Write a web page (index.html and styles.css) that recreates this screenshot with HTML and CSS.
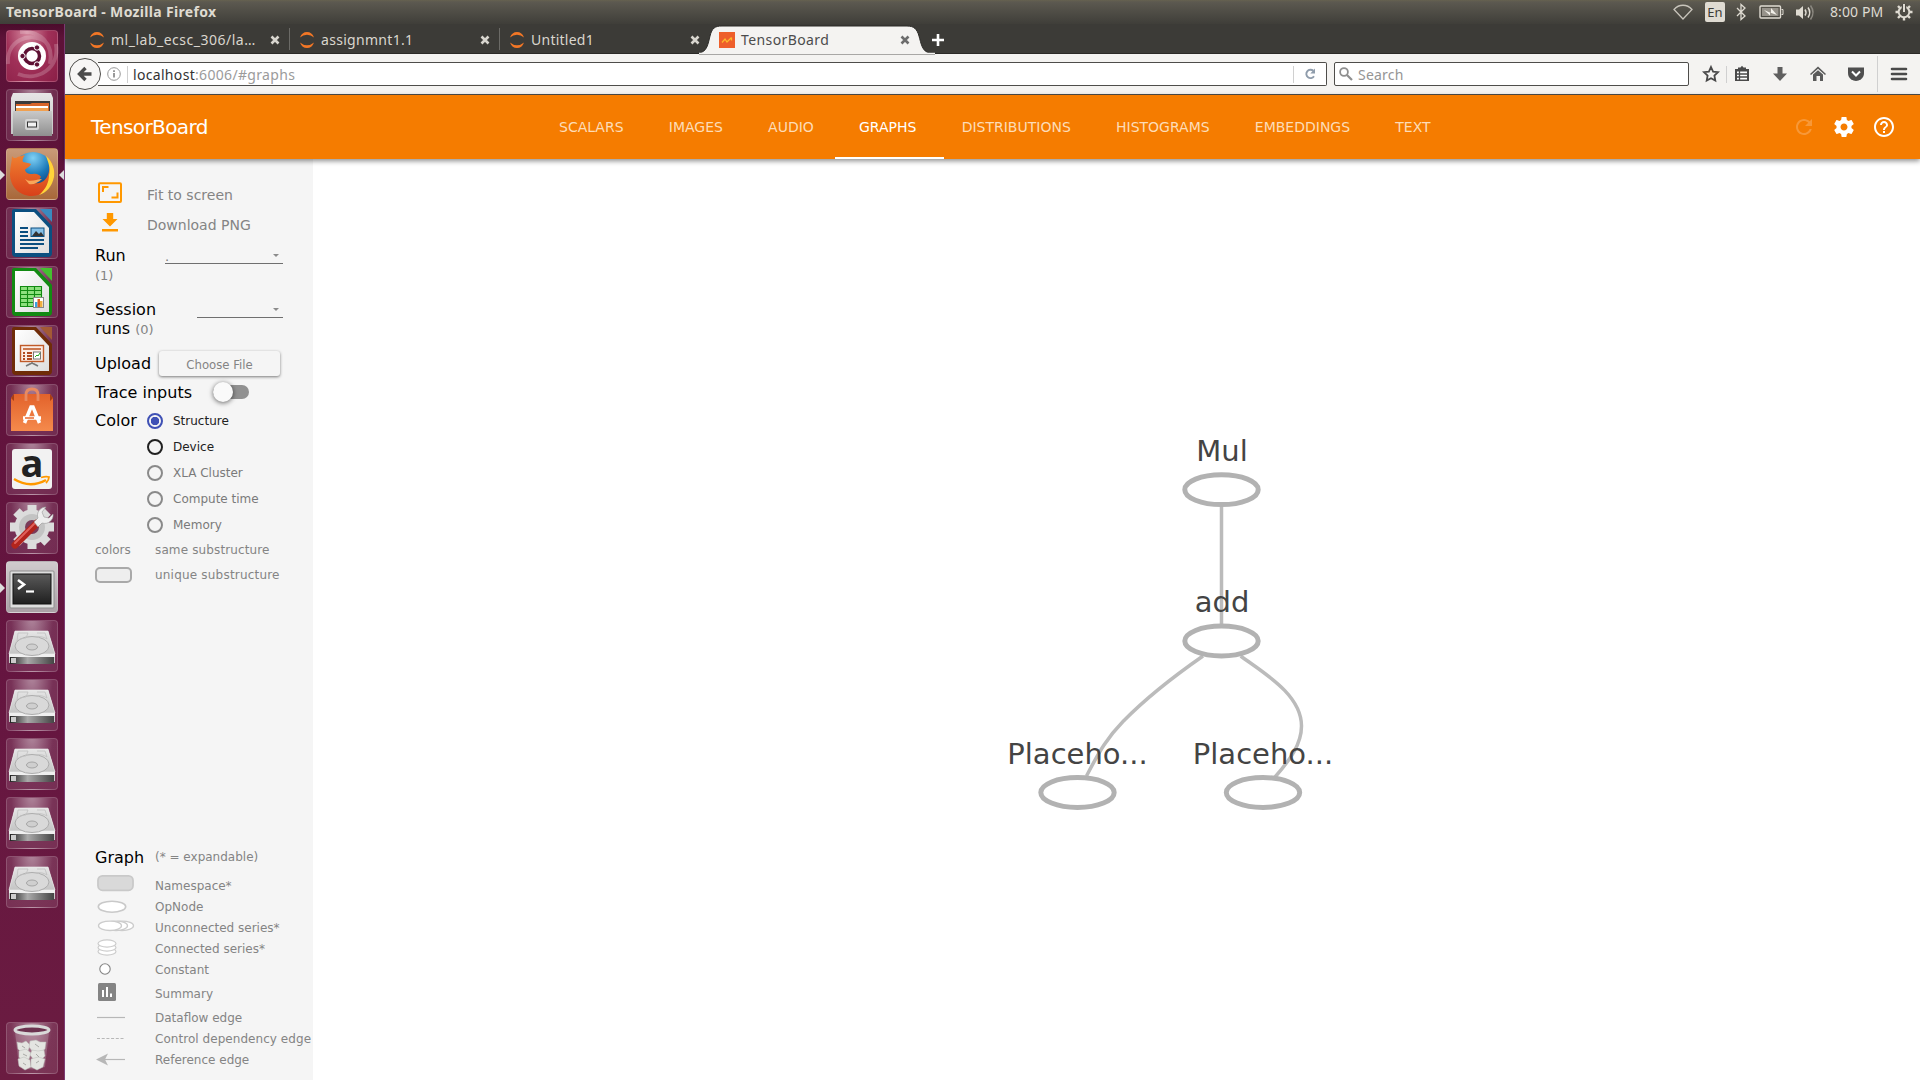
FILE: index.html
```html
<!DOCTYPE html>
<html lang="en">
<head>
<meta charset="utf-8">
<title>TensorBoard - Mozilla Firefox</title>
<link rel="stylesheet" href="styles.css">
</head>
<body>
<svg class="defs" aria-hidden="true">
  <defs>
    <linearGradient id="metal" x1="0" y1="0" x2="0" y2="1"><stop offset="0" stop-color="#e6e6e6"/><stop offset="1" stop-color="#c4c4c4"/></linearGradient>
    <linearGradient id="drawer" x1="0" y1="0" x2="0" y2="1"><stop offset="0" stop-color="#c9c9c9"/><stop offset="1" stop-color="#8f8f8f"/></linearGradient>
    <linearGradient id="paper" x1="0" y1="0" x2="1" y2="1"><stop offset="0" stop-color="#ffffff"/><stop offset="1" stop-color="#dedede"/></linearGradient>
    <linearGradient id="edge" x1="0" y1="0" x2="1" y2="0"><stop offset="0" stop-color="#222"/><stop offset=".4" stop-color="#aaa"/><stop offset="1" stop-color="#444"/></linearGradient>
    <linearGradient id="bag" x1="0" y1="0" x2="0" y2="1"><stop offset="0" stop-color="#e2622b"/><stop offset="1" stop-color="#f58a4c"/></linearGradient>
    <radialGradient id="globe" cx=".5" cy=".15" r=".85"><stop offset="0" stop-color="#7fd0f5"/><stop offset=".5" stop-color="#1a78b8"/><stop offset="1" stop-color="#0d2c66"/></radialGradient>
    <linearGradient id="fox" x1="0" y1="0" x2="0" y2="1"><stop offset="0" stop-color="#f08030"/><stop offset="1" stop-color="#d8401a"/></linearGradient>
    <linearGradient id="term" x1="0" y1="0" x2="0" y2="1"><stop offset="0" stop-color="#5a5a5a"/><stop offset="1" stop-color="#1f1f1f"/></linearGradient>
    <symbol id="disk" viewBox="0 0 52 52">
      <path d="M9 11h33l7 23v9H3v-9z" fill="url(#metal)"/>
      <path d="M9 11h33l7 23H3z" fill="url(#metal)" stroke="#efefef" stroke-width=".6"/>
      <path d="M4 37h44v7H4z" fill="url(#edge)"/>
      <path d="M3 34h46v3H3z" fill="#efefef"/>
      <path d="M5 38h5v5H5z" fill="#ccc"/>
      <ellipse cx="26" cy="26" rx="17" ry="9.500" fill="#d9d9d9" stroke="#adadad"/>
      <path d="M12 13h10l-2 5c-4 0-6 1-9 3zM31 13h8l2 6c-3-2-7-3-11-2" fill="none" stroke="#c0c0c0" stroke-width=".8"/>
      <ellipse cx="26" cy="27" rx="5.500" ry="3" fill="#cfcfcf" stroke="#999" stroke-width=".8"/>
    </symbol>
  </defs>
</svg>

<div class="desktop">
  <header class="panel">
    <span class="panel-title">TensorBoard - Mozilla Firefox</span>
    <div class="tray">
      <svg class="t-wifi" width="22" height="16" viewBox="0 0 22 16"><path d="M2 5.500C7-.2 15-.2 20 5.500L11 15z" fill="none" stroke="#c8c4bb" stroke-width="1.300"/></svg>
      <span class="lang">En</span>
      <svg class="t-bt" width="10" height="18" viewBox="0 0 10 18"><path d="M1 5l8 8-4 3.500v-15L9 5l-8 8" fill="none" stroke="#dfdbd2" stroke-width="1.300"/></svg>
      <svg class="t-bat" width="25" height="14" viewBox="0 0 25 14"><rect x="1" y="1" width="20.500" height="12" rx="1" fill="none" stroke="#dfdbd2" stroke-width="1.400"/><rect x="3" y="3" width="16.500" height="8" fill="#96928a"/><path d="M22.500 4.500h1.500v5h-1.500" fill="none" stroke="#dfdbd2"/><path d="M5 5l7 3V3l6 7-7-2.500v3z" fill="#f2f0ea"/></svg>
      <svg class="t-vol" width="21" height="17" viewBox="0 0 21 17"><path d="M1 5.500h3L8 2v13l-4-3.500H1z" fill="#dfdbd2"/><path d="M10 5.500q2 3 0 6M13 3.500q3.500 5 0 10" fill="none" stroke="#dfdbd2" stroke-width="1.500"/><path d="M15.500 1.500q5 7 0 14" fill="none" stroke="#8b8880" stroke-width="1.500"/></svg>
      <span class="clock">8:00 PM</span>
      <svg class="t-gear" width="18" height="18" viewBox="-9 -9 18 18"><circle r="5.300" fill="none" stroke="#dfdbd2" stroke-width="1.900"/><path d="M0-8v8" stroke="#4c4a44" stroke-width="4.500"/><path d="M0-8v8" stroke="#dfdbd2" stroke-width="2"/><path d="M6 0h2.500M-6 0h-2.500M0 6v2.500M4.200 4.200L6 6M-4.200 4.200L-6 6M4.200-4.200L6-6M-4.200-4.200L-6-6" stroke="#dfdbd2" stroke-width="2.400"/></svg>
    </div>
  </header>

  <div class="workspace">
    <nav class="launcher">
      <div class="tile dash"><svg viewBox="0 0 52 52"><path d="M2 34C0 12 22 0 40 12M50 14C54 38 32 52 12 44M14 2C34 0 48 14 44 34" fill="none" stroke="#fff" stroke-opacity=".2" stroke-width="4"/><circle cx="26" cy="26" r="14" fill="#fff"/><circle cx="26" cy="26" r="7.500" fill="none" stroke="#5e1033" stroke-width="3.500"/><g fill="#5e1033" stroke="#fff" stroke-width="1"><circle cx="16.500" cy="26" r="2.700"/><circle cx="31" cy="17.500" r="2.700"/><circle cx="31" cy="34.500" r="2.700"/></g></svg></div>
      <div class="tile"><svg viewBox="0 0 52 52"><path d="M7 4h38l2 5v36H5V9z" fill="url(#metal)"/><rect x="9" y="12" width="35" height="12" fill="#3a3a3a"/><path d="M10 15h14l2-1h17v9H10z" fill="#d8652a"/><rect x="10" y="17" width="32" height="2" fill="#fff"/><rect x="10" y="19" width="32" height="4" fill="#f0a050"/><rect x="7" y="22" width="39" height="25" fill="url(#drawer)"/><rect x="19" y="30" width="14" height="11" rx="2" fill="#d5d5d5"/><rect x="21.500" y="33" width="9" height="5" fill="#f2f2f2" stroke="#333"/></svg></div>
      <div class="tile firefox running active"><svg viewBox="0 0 52 52"><circle cx="27" cy="24" r="20" fill="url(#globe)"/><path d="M6 8c1 2 2 2 4 2 3-2 6-2 9-3-2 3-3 5-2 7 3 1 7 1 8 2-1 3-5 4-6 6 1 4 5 4 8 4 3-1 7 1 8 3-2 4-7 5-11 4 4 4 13 3 17-4 3-5 3-13 2-18 4 5 6 10 5 17C46 39 37 48 26 48 13 48 4 38 4 26 4 19 6 13 6 8z" fill="url(#fox)"/><path d="M40 8c7 6 9 14 8 21-2 10-8 16-15 18 7-6 10-13 10-20 2-7-1-13-3-19z" fill="#ffd43a"/><path d="M19 31c6 4 11 0 17 0-4 4-9 6-13 5z" fill="#f9a65a"/></svg></div>
      <div class="tile"><svg viewBox="0 0 52 52"><path d="M8 2h22l16 17v27q0 4-4 4H10q-4 0-4-4V4q0-2 2-2z" fill="#0b4f80"/><path d="M34 2h12v13z" fill="#3a8abf"/><path d="M9 5h19l15 16v25H9z" fill="url(#paper)"/><path d="M14 21h8M14 25h8M14 29h8M14 33h24M14 37h24M14 41h18" stroke="#0b4f80" stroke-width="1.800"/><rect x="25" y="21" width="13" height="8.500" fill="#86c1e8" stroke="#0b4f80"/><path d="M26 29l4-5 3 3 2-2 3 4z" fill="#333"/></svg></div>
      <div class="tile"><svg viewBox="0 0 52 52"><path d="M8 2h22l16 17v27q0 4-4 4H10q-4 0-4-4V4q0-2 2-2z" fill="#128a12"/><path d="M34 2h12v13z" fill="#45c030"/><path d="M9 5h19l15 16v25H9z" fill="url(#paper)"/><rect x="14.500" y="20.500" width="21" height="20" fill="#8ee07e"/><path d="M14.500 20.500h21v20h-21zM14.500 24.500h21M14.500 28.500h21M14.500 32.500h21M14.500 36.500h21M21.500 20.500v20M28.500 20.500v20" fill="none" stroke="#128a12" stroke-width="1.100"/><rect x="27.500" y="31.500" width="10" height="10" fill="#fff" stroke="#888"/><path d="M29 36h2.500v5H29z" fill="#3aa0e0"/><path d="M31.500 33H34v8h-2.500z" fill="#e06020"/><path d="M34 35h2.500v6H34z" fill="#f0b040"/></svg></div>
      <div class="tile"><svg viewBox="0 0 52 52"><path d="M8 2h22l16 17v27q0 4-4 4H10q-4 0-4-4V4q0-2 2-2z" fill="#6f2c08"/><path d="M34 2h12v13z" fill="#a35a35"/><path d="M9 5h19l15 16v25H9z" fill="url(#paper)"/><rect x="14.500" y="20.500" width="23" height="16" fill="#fbece4" stroke="#c05a28" stroke-width="1.400"/><path d="M17 24h18" stroke="#c05a28" stroke-width="1.600"/><path d="M17 28h2M17 31h2M17 34h2M21 28h5M21 31h5M21 34h5" stroke="#b04a20" stroke-width="1.800"/><rect x="27.500" y="27" width="7" height="7" fill="#fff" stroke="#777"/><path d="M29 32l2-2 1 1 2-3" stroke="#2a2" fill="none"/><path d="M26 37v2M20 41l6-3 6 3" fill="none" stroke="#777" stroke-width="1.600"/></svg></div>
      <div class="tile"><svg viewBox="0 0 52 52"><path d="M5 14l3-4h36l3 4v33H5z" fill="url(#bag)"/><path d="M5 14l3-4v7zM47 14l-3-4v7z" fill="#a83e14"/><path d="M20 17V11q0-6 6-6t6 6v6" fill="none" stroke="#e88a60" stroke-width="2.800"/><path d="M18.500 39l6.500-16h2l6.500 16" fill="none" stroke="#fff" stroke-width="3.500"/><path d="M17 34h18" stroke="#fff" stroke-width="3.500"/><path d="M19 34h9" stroke="#e8692f" stroke-width="1.500"/></svg></div>
      <div class="tile amazon"><svg viewBox="0 0 52 52"><rect x="6" y="6" width="40" height="40" rx="3" fill="#f2f2f2"/><text x="26" y="34" text-anchor="middle" class="amazon-a">a</text><path d="M8 36q16 10 32 1" fill="none" stroke="#f90" stroke-width="2.400"/><path d="M35 34.500q5-1.500 8-.5 0 3-3 6" fill="none" stroke="#f90" stroke-width="1.800"/></svg></div>
      <div class="tile"><svg viewBox="0 0 52 52"><g transform="translate(26 25)"><circle r="14" fill="none" stroke="#dcdcdc" stroke-width="7"/><g fill="#dcdcdc"><rect x="-4.500" y="-22" width="9" height="8"/><rect x="-4.500" y="14" width="9" height="8"/><rect x="-22" y="-4.500" width="8" height="9"/><rect x="14" y="-4.500" width="8" height="9"/><g transform="rotate(45)"><rect x="-4.500" y="-22" width="9" height="8"/><rect x="-4.500" y="14" width="9" height="8"/><rect x="-22" y="-4.500" width="8" height="9"/><rect x="14" y="-4.500" width="8" height="9"/></g></g><circle r="13" fill="#c3c3c3"/><circle r="7" fill="#7a3b5a"/></g><path d="M9 43l22-22" stroke="#b3241c" stroke-width="7" stroke-linecap="round"/><path d="M9 41l20-20" stroke="#e0605a" stroke-width="2" stroke-linecap="round"/><path d="M28 20l4-4c-2-5 2-11 8-11l-4 5 2 5 5 1 4-4c1 6-5 11-11 9l-4 4z" fill="#eee" stroke="#999" stroke-width=".6"/></svg></div>
      <div class="tile terminal running"><svg viewBox="0 0 52 52"><rect x="4" y="10" width="44" height="37" rx="1" fill="#dedede" stroke="#8d8d8d"/><rect x="7" y="13" width="38" height="30" fill="url(#term)" stroke="#111"/><path d="M12 19l6 4.500-6 4.500" fill="none" stroke="#fff" stroke-width="2.600"/><path d="M20 30.500h8" stroke="#fff" stroke-width="2.200"/></svg></div>
      <div class="tile"><svg><use href="#disk"/></svg></div>
      <div class="tile"><svg><use href="#disk"/></svg></div>
      <div class="tile"><svg><use href="#disk"/></svg></div>
      <div class="tile"><svg><use href="#disk"/></svg></div>
      <div class="tile"><svg><use href="#disk"/></svg></div>
      <div class="tile trash"><svg viewBox="0 0 52 52"><path d="M9 10l4 35q13 5 26 0l4-35z" fill="#e8dfe4" fill-opacity=".22"/><g fill="#e4e5e1" stroke="#b9bab6" stroke-width=".5"><path d="M11 20l5 1 4-2 4 4-2 6-6 2-4-4z"/><path d="M24 19l6-1 4 2 6 0-1 7-5 4-7-1-4-5z"/><path d="M13 29l7-2 5 4-2 6-7 2-3-4z"/><path d="M26 28l6 1 6-1 1 6-5 5-6-1-4-5z"/><path d="M12 37l6-2 6 3 1 7-6 3-6-4z"/><path d="M25 37l7-2 7 2-2 8-6 3-6-3z"/></g><path d="M16 24l3 2M29 22l4 3M17 32l4 2M30 32l3 3M17 41l3 2M30 41l3-2" stroke="#a9aaa6" stroke-width="1"/><ellipse cx="26" cy="8" rx="17" ry="4" fill="#6d3350" stroke="#d9d9d9" stroke-width="3"/></svg></div>
    </nav>

    <main class="browser">
      <div class="tabstrip">
        <div class="tab"><svg class="jup" viewBox="0 0 16 18"><path d="M1 6.500Q3 1 8 1t7 5.500Q12 3.800 8 3.800T1 6.500zM1 11.500Q3 17 8 17t7-5.500Q12 14.200 8 14.200T1 11.500z" fill="#f37726"/></svg><span class="tab-label l1">ml_lab_ecsc_306/la…</span><svg class="close" viewBox="0 0 10 10"><path d="M1.500 1.500l7 7M8.500 1.500l-7 7"/></svg></div>
        <div class="tab"><svg class="jup" viewBox="0 0 16 18"><path d="M1 6.500Q3 1 8 1t7 5.500Q12 3.800 8 3.800T1 6.500zM1 11.500Q3 17 8 17t7-5.500Q12 14.200 8 14.200T1 11.500z" fill="#f37726"/></svg><span class="tab-label l2">assignmnt1.1</span><svg class="close" viewBox="0 0 10 10"><path d="M1.500 1.500l7 7M8.500 1.500l-7 7"/></svg></div>
        <div class="tab last"><svg class="jup" viewBox="0 0 16 18"><path d="M1 6.500Q3 1 8 1t7 5.500Q12 3.800 8 3.800T1 6.500zM1 11.500Q3 17 8 17t7-5.500Q12 14.200 8 14.200T1 11.500z" fill="#f37726"/></svg><span class="tab-label l3">Untitled1</span><svg class="close" viewBox="0 0 10 10"><path d="M1.500 1.500l7 7M8.500 1.500l-7 7"/></svg></div>
        <div class="tab current">
          <svg class="tab-shape" width="236" height="30" viewBox="0 0 236 30"><path d="M0 29C8 28 9 20 11 12S16 2 23 2H208C215 2 218 5 220 12S223 28 231 29H236V30H0z" fill="#f4f3f1" stroke="#2b2a27" stroke-width="1"/><path d="M0 29.500h236" stroke="#f4f3f1" stroke-width="1.500"/></svg>
          <svg class="tbfav" viewBox="0 0 16 16"><path fill="#ee5f2b" d="M0 0h16v16H0z"/><path d="M3 10.500l3-3.500 2 3 4.500-4.500M12.500 5.500v3" fill="none" stroke="#fdb92b" stroke-width="1.300"/></svg><span class="tab-label l4">TensorBoard</span><svg class="close" viewBox="0 0 10 10"><path d="M1.500 1.500l7 7M8.500 1.500l-7 7"/></svg></div>
        <svg class="newtab" viewBox="0 0 14 14"><path d="M7 1v12M1 7h12" stroke="#fff" stroke-width="2.600"/></svg>
      </div>

      <div class="toolbar">
        <div class="back"><svg viewBox="0 0 16 16"><path d="M8.500 2L2.500 8l6 6M3 8h11.500" fill="none" stroke="#4b4b4b" stroke-width="3.400"/></svg></div>
        <div class="urlbar">
          <svg class="info" viewBox="0 0 14 14"><circle cx="7" cy="7" r="6.300" fill="none" stroke="#999"/><path d="M7 6v4.500M7 3.200v1.700" stroke="#888" stroke-width="1.700"/></svg>
          <i class="vsep"></i>
          <span class="url"><b>localhost</b><span>:6006/#graphs</span></span>
          <i class="vsep reload-sep"></i>
          <svg class="reload" viewBox="0 0 14 14"><path d="M10.300 3.800A4.200 4.200 0 1 0 11 9.300" fill="none" stroke="#8f9cab" stroke-width="1.900"/><path d="M12 1.500v5H7.300z" fill="#8f9cab"/></svg>
        </div>
        <div class="search"><svg viewBox="0 0 14 14"><circle cx="5" cy="5" r="3.900" fill="none" stroke="#8f8f8f" stroke-width="1.800"/><path d="M8 8l5 5" stroke="#8f8f8f" stroke-width="2.200"/></svg><span class="ph">Search</span></div>
        <div class="actions">
          <svg class="a-star" viewBox="0 0 18 18"><path d="M9 2l2.100 4.600 4.900.6-3.600 3.400.9 5L9 13.200l-4.300 2.400.9-5L2 7.200l4.900-.6z" fill="none" stroke="#4a4a4a" stroke-width="1.800"/></svg>
          <i class="vsep"></i>
          <svg class="a-clip" viewBox="0 0 18 18"><path d="M2 4h14v12H2z" fill="#4a4a4a"/><path d="M5 4V2.500h2.500L9 .8l1.500 1.700H13V4z" fill="#4a4a4a"/><path d="M4 6.500h10v8H4z" fill="#fff"/><path d="M4 9h10M4 12h10M6.500 6v9" stroke="#4a4a4a" stroke-width="1.300"/></svg>
          <svg class="a-down" viewBox="0 0 18 18"><path d="M6.500 2h5v6.500H16L9 16 2 8.500h4.500z" fill="#5f5f5f"/></svg>
          <svg class="a-home" viewBox="0 0 18 18"><path d="M9 1.500L17 9l-1 1-7-6.300L2 10 1 9z" fill="#5a5a5a"/><path d="M4 9.500l5-4.300 5 4.300V16h-3v-5H7.500v5H4z" fill="#5a5a5a"/></svg>
          <svg class="a-pocket" viewBox="0 0 18 18"><path d="M1 2.500h16V8q0 4-3 6.300-5 3.500-10 0Q1 12 1 8z" fill="#4f4f4f"/><path d="M5 6.500l4 4 4-4" fill="none" stroke="#fff" stroke-width="2"/></svg>
          <i class="vsep tall"></i>
          <svg class="a-menu" viewBox="0 0 18 18"><path d="M2 4h14M2 9h14M2 14h14" stroke="#4a4a4a" stroke-width="2.600" stroke-linecap="round"/></svg>
        </div>
      </div>

      <div class="app">
        <header class="appbar">
          <h1>TensorBoard</h1>
          <nav class="navtabs"><a>SCALARS</a><a>IMAGES</a><a>AUDIO</a><a class="selected">GRAPHS</a><a>DISTRIBUTIONS</a><a>HISTOGRAMS</a><a>EMBEDDINGS</a><a>TEXT</a></nav>
          <div class="app-icons">
            <svg class="dim" viewBox="0 0 24 24"><path d="M17.650 6.350C16.200 4.900 14.210 4 12 4c-4.420 0-7.990 3.580-7.990 8s3.570 8 7.990 8c3.730 0 6.840-2.550 7.730-6h-2.080c-.82 2.330-3.040 4-5.650 4-3.310 0-6-2.690-6-6s2.690-6 6-6c1.660 0 3.140.69 4.220 1.780L13 11h7V4z"/></svg>
            <svg viewBox="0 0 24 24"><path d="M19.430 12.980c.04-.32.07-.64.07-.98s-.03-.66-.07-.98l2.110-1.650c.19-.15.24-.42.12-.64l-2-3.460c-.12-.22-.39-.3-.61-.22l-2.490 1c-.52-.4-1.080-.73-1.690-.98l-.38-2.650C14.460 2.180 14.250 2 14 2h-4c-.25 0-.46.18-.49.42l-.38 2.650c-.61.25-1.170.59-1.690.98l-2.490-1c-.23-.09-.49 0-.61.22l-2 3.460c-.13.22-.07.49.12.64l2.110 1.650c-.04.32-.07.65-.07.98s.03.66.07.98l-2.110 1.650c-.19.15-.24.42-.12.64l2 3.460c.12.22.39.3.61.22l2.490-1c.52.4 1.080.73 1.690.98l.38 2.650c.03.24.24.42.49.42h4c.25 0 .46-.18.49-.42l.38-2.650c.61-.25 1.170-.59 1.690-.98l2.490 1c.23.09.49 0 .61-.22l2-3.460c.12-.22.07-.49-.12-.64l-2.110-1.650zM12 15.500c-1.930 0-3.500-1.570-3.500-3.500s1.570-3.500 3.500-3.500 3.500 1.570 3.500 3.500-1.570 3.500-3.500 3.500z"/></svg>
            <svg viewBox="0 0 24 24"><path d="M11 18h2v-2h-2v2zm1-16C6.480 2 2 6.480 2 12s4.480 10 10 10 10-4.480 10-10S17.520 2 12 2zm0 18c-4.410 0-8-3.590-8-8s3.590-8 8-8 8 3.590 8 8-3.590 8-8 8zm0-14c-2.210 0-4 1.790-4 4h2c0-1.100.9-2 2-2s2 .9 2 2c0 2-3 1.750-3 5h2c0-2.250 3-2.500 3-5 0-2.210-1.790-4-4-4z"/></svg>
          </div>
        </header>

        <div class="content">
          <aside class="sidebar">
            <div class="controls">
              <div class="tool"><svg viewBox="0 0 28 24"><path d="M3 3.300h20q1 0 1 1V21q0 1-1 1H3q-1 0-1-1V4.300q0-1 1-1z" fill="none" stroke="#ff9800" stroke-width="2"/><path d="M6 12V7h5.500M20.500 12.500v5H14.500" fill="none" stroke="#ff9800" stroke-width="2"/></svg><span>Fit to screen</span></div>
              <div class="tool"><svg viewBox="0 0 28 24"><path d="M20.500 9h-4.300V3H9.800v6H5.500l7.500 7.500zM5 19v2.500h16V19z" fill="#ff9800"/></svg><span>Download PNG</span></div>
              <div class="field run"><div class="field-label">Run<small class="below">(1)</small></div><div class="select wide"><span>.</span><i></i></div></div>
              <div class="field session"><div class="field-label">Session<br>runs <small>(0)</small></div><div class="select"><span></span><i></i></div></div>
              <div class="upload"><span>Upload</span><button>Choose File</button></div>
              <div class="trace"><span>Trace inputs</span><div class="toggle"></div></div>
              <div class="color"><span class="color-title">Color</span>
                <div class="radios">
                  <label class="radio on"><i></i>Structure</label>
                  <label class="radio"><i></i>Device</label>
                  <label class="radio off"><i></i>XLA Cluster</label>
                  <label class="radio off"><i></i>Compute time</label>
                  <label class="radio off"><i></i>Memory</label>
                </div>
              </div>
              <div class="key"><span>colors</span><span class="sub">same substructure</span></div>
              <div class="key"><span><b class="swatch"></b></span><span class="sub wider">unique substructure</span></div>
            </div>
            <div class="legend">
              <div class="legend-head"><span class="lh">Graph</span><span>(* = expandable)</span></div>
              <div class="lrow"><svg viewBox="0 0 60 21"><rect x="3" y=".8" width="35" height="14.500" rx="4.500" fill="#d9d9d9" stroke="#c9c9c9" stroke-width="1.800"/></svg><span>Namespace*</span></div>
              <div class="lrow"><svg viewBox="0 0 60 21"><ellipse cx="17" cy="10.700" rx="13.700" ry="5.500" fill="#fff" stroke="#c9c9c9" stroke-width="1.600"/></svg><span>OpNode</span></div>
              <div class="lrow"><svg viewBox="0 0 60 21"><g fill="#fff" stroke="#ccc" stroke-width="1.300"><ellipse cx="27" cy="8.800" rx="11.500" ry="4.700"/><ellipse cx="21" cy="8.800" rx="11.500" ry="4.700"/><ellipse cx="15" cy="8.800" rx="11.500" ry="4.700"/></g></svg><span>Unconnected series*</span></div>
              <div class="lrow"><svg viewBox="0 0 60 21"><g fill="#fff" stroke="#ccc" stroke-width="1.200"><ellipse cx="12" cy="13.500" rx="9" ry="3.600"/><ellipse cx="12" cy="9.500" rx="9" ry="3.600"/><ellipse cx="12" cy="5.500" rx="9" ry="3.600"/></g></svg><span>Connected series*</span></div>
              <div class="lrow"><svg viewBox="0 0 60 21"><circle cx="10" cy="10" r="5.200" fill="#fff" stroke="#848484" stroke-width="1.100"/></svg><span>Constant</span></div>
              <div class="lrow tall"><svg viewBox="0 0 60 27"><rect x="3" y="3" width="18" height="18" rx="1.500" fill="#848484"/><path d="M8 10v7M12 7v10M16 13.500V17" stroke="#fff" stroke-width="2"/></svg><span>Summary</span></div>
              <div class="lrow"><svg viewBox="0 0 60 21"><path d="M2 10.500h28" stroke="#b7b7b7" stroke-width="1.200"/></svg><span>Dataflow edge</span></div>
              <div class="lrow"><svg viewBox="0 0 60 21"><path d="M2 10.500h28" stroke="#b7b7b7" stroke-width="1.200" stroke-dasharray="3 1.700"/></svg><span class="spread">Control dependency edge</span></div>
              <div class="lrow"><svg viewBox="0 0 60 21"><path d="M10 10.500h20" stroke="#b7b7b7" stroke-width="1.200"/><path d="M1 10.500l12-6-3 6 3 6z" fill="#b7b7b7"/></svg><span>Reference edge</span></div>
            </div>
          </aside>

          <section class="canvas">
            <svg class="graph" width="1607" height="921" viewBox="313 159 1607 921">
              <g class="edges"><path d="M1221.500 507V624"/><path d="M1203 656C1180 672 1150 694 1123 721.500C1107 738 1100 750 1086.500 776"/><path d="M1240.700 656C1262 672 1301.500 694 1301.500 726C1301.500 744 1290 760 1275 777"/></g>
              <g class="nodes"><ellipse cx="1221.500" cy="489.700" rx="36.700" ry="14.900"/><ellipse cx="1221.500" cy="641" rx="36.700" ry="14.900"/><ellipse cx="1077.500" cy="792.500" rx="36.700" ry="14.900"/><ellipse cx="1263" cy="792.500" rx="36.700" ry="14.900"/></g>
              <g class="names"><text x="1222" y="460.500">Mul</text><text x="1222" y="611.700">add</text><text x="1077.500" y="763.500">Placeho...</text><text x="1263" y="763.500">Placeho...</text></g>
            </svg>
          </section>
        </div>
      </div>
    </main>
  </div>
</div>
</body>
</html>
```
FILE: styles.css
```css
* { box-sizing: border-box; }
body { margin: 0; overflow: hidden; font-family: "DejaVu Sans", sans-serif; }
.defs { position: absolute; width: 0; height: 0; }
svg { display: block; flex: none; overflow: visible; }

.desktop { width: 1920px; height: 1080px; display: flex; flex-direction: column; }
.workspace { flex: 1; display: flex; min-height: 0; }

/* system panel */
.panel { height: 24px; flex: none; display: flex; justify-content: space-between; align-items: center; padding-left: 6px; background: linear-gradient(#66624f 0, #5c5950 2px, #3f3e39 100%); color: #dfdbd2; font-family: "Noto Sans", sans-serif; }
.panel-title { font-size: 14px; font-weight: 700; line-height: 24px; letter-spacing: .32px; }
.tray { display: flex; align-items: center; width: 248px; }
.lang { width: 20px; height: 20px; margin-left: 11px; border-radius: 2px; background: #dfdbd2; color: #3c3b37; font-size: 13px; line-height: 20px; text-align: center; }
.t-bt { margin-left: 11px; }
.t-bat { margin-left: 13px; }
.t-vol { margin-left: 11px; }
.clock { margin-left: 14px; width: 54px; font-size: 14px; line-height: 24px; white-space: nowrap; letter-spacing: .1px; }
.t-gear { margin-left: 11px; }

/* launcher */
.launcher { width: 65px; flex: none; padding: 6px 0 6px 6px; display: flex; flex-direction: column; gap: 7px; border-right: 1px solid #7b3a72; background: linear-gradient(#4b0c2c 0, #5d1238 14px, #651540 60%, #6b1c41 100%); }
.tile { position: relative; width: 52px; height: 52px; flex: none; border-radius: 4px; border: 1px solid rgba(255,255,255,.16); background: radial-gradient(ellipse at 50% -10%, rgba(255,255,255,.5), rgba(255,255,255,.12) 60%, rgba(255,255,255,.1)); }
.tile svg { width: 52px; height: 52px; margin: -1px; }
.dash { background: radial-gradient(ellipse at 40% 0, #d78aa0, #a03058 50%, #8b1f47); }
.firefox { background: linear-gradient(#c99a78, #a8683a); }
.terminal { background: linear-gradient(#d0cacd, #aaa0a6); }
.trash { margin-top: auto; }
.running::before { content: ""; position: absolute; left: -7px; top: 21px; border: 5px solid transparent; border-left-color: #ddd; border-right: 0; }
.active::after { content: ""; position: absolute; right: -7px; top: 21px; border: 5px solid transparent; border-right-color: #ddd; border-left: 0; }
.amazon-a { font: 700 38px "Open Sans", sans-serif; fill: #222; }

/* browser chrome */
.browser { flex: 1; min-width: 0; display: flex; flex-direction: column; font-family: "Noto Sans", sans-serif; }
.tabstrip { height: 30px; flex: none; display: flex; align-items: center; padding-left: 15px; background: #3c3b37; border-bottom: 1px solid #2b2a27; }
.tab { position: relative; width: 210px; height: 22px; flex: none; display: flex; align-items: center; padding: 2px 9px 0 9px; border-right: 1px solid #6b6a66; color: #dad6ce; }
.tab.last { border-color: transparent; }
.jup { width: 16px; height: 18px; }
.tab-label { margin-left: 6px; font-size: 14px; line-height: 22px; white-space: nowrap; flex: 1; }
.l1 { letter-spacing: .5px; }
.l2 { letter-spacing: .3px; }
.l3 { letter-spacing: .25px; }
.l4 { position: relative; letter-spacing: .4px; }
.close { position: relative; width: 10px; height: 10px; stroke: #d9d6cf; stroke-width: 2.600; }
.current { border: 0; width: 210px; padding-right: 10px; color: #4c4c4c; }
.current .close { stroke: #6c6c6c; }
.tab-shape { position: absolute; left: -11px; top: -4px; }
.tbfav { position: relative; width: 16px; height: 16px; }
.newtab { width: 14px; height: 14px; margin: 2px 0 0 11px; }

.toolbar { height: 41px; flex: none; display: flex; align-items: center; padding-left: 4px; background: #f4f3f1; border-bottom: 1px solid #4e4d4a; }
.back { position: relative; z-index: 1; width: 32px; height: 32px; flex: none; border: 1px solid #4e4d4a; border-radius: 50%; background: #f7f6f5; display: flex; align-items: center; justify-content: center; }
.back svg { width: 16px; height: 16px; }
.urlbar { width: 1229px; height: 24px; flex: none; margin-left: -3px; padding-left: 9px; display: flex; align-items: center; background: #fff; border: 1px solid #4e4d4a; border-left: 0; border-radius: 0 2px 2px 0; }
.info { width: 14px; height: 14px; }
.vsep { width: 1px; height: 17px; margin-left: 6px; background: #d0d0d0; }
.url { flex: 1; margin-left: 5px; padding-top: 2px; font-size: 14px; line-height: 20px; letter-spacing: .32px; color: #9b9b9b; }
.url b { font-weight: 400; color: #333; }
.reload-sep { margin-right: 9px; }
.reload { width: 14px; height: 14px; margin-right: 9px; }
.search { width: 355px; height: 24px; flex: none; margin-left: 7px; padding-left: 4px; display: flex; align-items: center; gap: 5px; background: #fff; border: 1px solid #4e4d4a; border-radius: 2px; font-size: 14px; color: #959595; }
.ph { padding-top: 2px; line-height: 20px; letter-spacing: .2px; }
.search svg { width: 14px; height: 14px; }
.actions { display: flex; align-items: center; height: 40px; }
.actions svg { width: 18px; height: 18px; }
.a-star { margin-left: 13px; }
.a-clip { margin-left: 6px; }
.a-down, .a-home, .a-pocket { margin-left: 20px; }
.vsep.tall { height: 36px; margin-left: 12px; }
.a-menu { margin-left: 12px; }

/* app */
.app { flex: 1; display: flex; flex-direction: column; min-height: 0; font-family: "DejaVu Sans", sans-serif; }
.appbar { position: relative; z-index: 1; height: 64px; flex: none; display: flex; align-items: center; padding: 0 24px 0 26px; background: #f57c00; color: #fff; box-shadow: 0 2px 5px rgba(0,0,0,.45); }
.appbar h1 { width: 468px; margin: 0; font-size: 20px; font-weight: 400; letter-spacing: -.6px; }
.navtabs { display: flex; flex: 1; gap: 45.200px; height: 64px; line-height: 64px; font-size: 14px; color: #fddcb8; }
.navtabs .selected { position: relative; color: #fff; }
.selected::after { content: ""; position: absolute; left: -24px; bottom: 0; width: 109px; height: 2px; background: #fff; }
.app-icons { display: flex; gap: 16px; }
.app-icons svg { width: 24px; height: 24px; fill: #fff; }
.app-icons .dim { fill-opacity: .22; }
.content { flex: 1; display: flex; min-height: 0; }
.canvas { flex: 1; background: #fff; }

.sidebar { width: 248px; flex: none; padding: 21px 0 10px 30px; background: #f5f5f5; display: flex; flex-direction: column; justify-content: space-between; }
.tool { height: 30px; display: flex; align-items: center; gap: 22px; padding-left: 2px; font-size: 14px; color: #848484; white-space: nowrap; }
.tool svg { width: 28px; height: 24px; margin-top: -6px; }
.field { display: flex; justify-content: space-between; width: 188px; font-size: 16px; line-height: 19px; }
.field small { font-size: 13px; color: #848484; }
.run { height: 54px; padding-top: 6px; }
.below { display: block; line-height: 21px; }
.session { height: 54px; padding-top: 6px; }
.select { width: 86px; height: 18px; border-bottom: 1px solid #6f6f6f; display: flex; justify-content: space-between; align-items: center; padding-right: 4px; font-size: 13px; color: #777; }
.select span { padding-top: 3px; }
.select.wide { width: 118px; }
.select i { border: 3px solid transparent; border-top-color: #8b8b8b; border-bottom: 0; margin-top: 1px; }
.upload { display: flex; align-items: center; height: 29px; padding-top: 1px; gap: 8px; font-size: 16px; }
.upload button { width: 121px; height: 25px; margin-top: 1px; padding: 2px 0 0; border: 0; border-radius: 3px; background: #f5f5f5; box-shadow: 0 1px 3px rgba(0,0,0,.5); font: 11.700px "DejaVu Sans", sans-serif; color: #848484; }
.trace { display: flex; align-items: center; height: 30px; font-size: 16px; gap: 21px; }
.toggle { position: relative; width: 36px; height: 14px; border-radius: 7px; background: #919191; }
.toggle::before { content: ""; position: absolute; left: 0; top: -3px; width: 20px; height: 20px; border-radius: 50%; background: #fafafa; box-shadow: 0 1px 5px rgba(0,0,0,.6); }
.color { display: flex; height: 130px; padding-top: 1px; font-size: 16px; }
.color-title { width: 52px; line-height: 26px; }
.radio { display: flex; align-items: center; gap: 10px; height: 26px; font-size: 12px; color: #212121; }
.radio i { width: 16px; height: 16px; border: 2px solid #212121; border-radius: 50%; }
.radio.on i { border-color: #3f51b5; background: radial-gradient(circle, #3f51b5 0 4px, transparent 4.500px); }
.radio.off { color: #7a7a7a; }
.radio.off i { border-color: #8a8a8a; }
.key { display: flex; align-items: center; height: 25px; font-size: 12px; color: #848484; }
.key > :first-child { width: 60px; }
.sub { letter-spacing: .13px; white-space: nowrap; }
.sub.wider { letter-spacing: .2px; }
.swatch { display: block; width: 37px; height: 16px; border: 2px solid #a9a9a9; border-radius: 5px; background: #eee; }
.legend { font-size: 12px; color: #848484; }
.legend-head { display: flex; align-items: center; height: 36px; }
.lh { width: 60px; font-size: 16px; color: #000; }
.lrow { display: flex; align-items: center; height: 21px; white-space: nowrap; }
.lrow svg { width: 60px; height: 21px; }
.lrow.tall { height: 27px; }
.lrow.tall svg { height: 27px; }
.spread { letter-spacing: .05px; }

.edges path { fill: none; stroke: #bbb; stroke-width: 3.500; }
.nodes ellipse { fill: #fff; stroke: #b2b2b2; stroke-width: 5; }
.names text { font-size: 29px; fill: #444; text-anchor: middle; }
```
